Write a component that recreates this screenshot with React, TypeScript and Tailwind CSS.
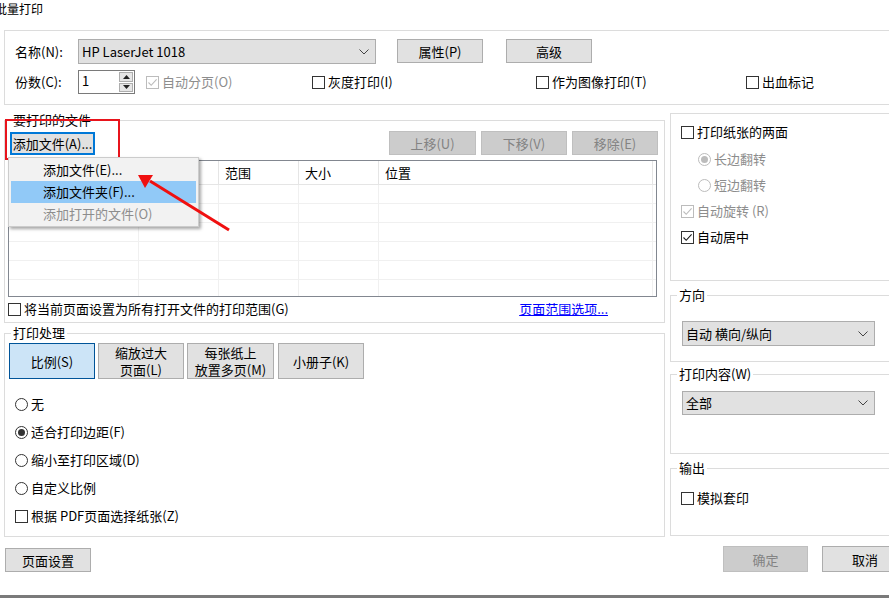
import type { ReactNode } from 'react';

function Chevron() {
  return (
    <svg width="10" height="6" viewBox="0 0 10 6" className="shrink-0">
      <path d="M0.5 0.5 L5 5 L9.5 0.5" fill="none" stroke="#444" strokeWidth="1" />
    </svg>
  );
}

function Btn({
  children,
  className = '',
  disabled,
  selected,
}: {
  children: ReactNode;
  className?: string;
  disabled?: boolean;
  selected?: boolean;
}) {
  let tone = 'bg-[#e1e1e1] border-[#adadad] text-black';
  if (disabled) tone = 'bg-[#cccccc] border-[#bfbfbf] text-[#838383]';
  if (selected) tone = 'bg-[#cce4f7] border-[#005499] text-black';
  return (
    <div className={`flex items-center justify-center border text-center leading-[17px] ${tone} ${className}`}>
      {children}
    </div>
  );
}

function Check({
  label,
  checked,
  disabled,
  className = '',
}: {
  label: string;
  checked?: boolean;
  disabled?: boolean;
  className?: string;
}) {
  const stroke = disabled ? '#bcbcbc' : '#1a1a1a';
  return (
    <div className={`flex items-center gap-[3px] ${className}`}>
      <span
        className={`flex h-[13px] w-[13px] shrink-0 items-center justify-center border bg-white ${
          disabled ? 'border-[#bcbcbc]' : 'border-[#333333]'
        }`}
      >
        {checked && (
          <svg width="11" height="11" viewBox="0 0 11 11">
            <path d="M1.5 5.5 L4.2 8.3 L9.6 2.4" fill="none" stroke={stroke} strokeWidth="1.1" />
          </svg>
        )}
      </span>
      <span className={`whitespace-nowrap ${disabled ? 'text-[#8d8d8d]' : 'text-black'}`}>{label}</span>
    </div>
  );
}

function Radio({ label, checked, disabled }: { label: string; checked?: boolean; disabled?: boolean }) {
  return (
    <div className="flex items-center gap-[3px]">
      <span
        className={`flex h-[13px] w-[13px] shrink-0 items-center justify-center rounded-full border bg-white ${
          disabled ? 'border-[#bcbcbc]' : 'border-[#333333]'
        }`}
      >
        {checked && <span className={`h-[7px] w-[7px] rounded-full ${disabled ? 'bg-[#bcbcbc]' : 'bg-[#333333]'}`} />}
      </span>
      <span className={`whitespace-nowrap ${disabled ? 'text-[#8d8d8d]' : 'text-black'}`}>{label}</span>
    </div>
  );
}

function Combo({ value, className = '' }: { value: string; className?: string }) {
  return (
    <div className={`flex items-center justify-between border border-[#adadad] bg-[#e1e1e1] pl-[3px] pr-[6px] ${className}`}>
      <span className="whitespace-nowrap">{value}</span>
      <Chevron />
    </div>
  );
}

// group box with a caption sitting on the top border
function Group({ label, className = '', children }: { label: string; className?: string; children: ReactNode }) {
  return (
    <fieldset className={`border border-[#dcdcdc] ${className}`}>
      <legend className="ml-[6px] px-[2px] leading-[16px]">{label}</legend>
      {children}
    </fieldset>
  );
}

const columns = [
  { label: '文件名', w: 'w-[130px]' },
  { label: '页数', w: 'w-[80px]' },
  { label: '范围', w: 'w-[80px]' },
  { label: '大小', w: 'w-[80px]' },
  { label: '位置', w: 'w-[274px]' },
];

function FileTable() {
  return (
    <div className="h-[137px] w-[649px] overflow-hidden border border-[#828790] bg-white">
      <div className="flex h-[24px] border-b border-[#e5e5e5]">
        {columns.map((c) => (
          <div key={c.label} className={`${c.w} flex items-center border-r border-[#e5e5e5] pl-[6px] leading-[16px]`}>
            {c.label}
          </div>
        ))}
      </div>
      {[0, 1, 2, 3, 4, 5].map((r) => (
        <div key={r} className="flex h-[19px] border-b border-[#f0f0f0]">
          {columns.map((c) => (
            <div key={c.label} className={`${c.w} border-r border-[#f0f0f0]`} />
          ))}
        </div>
      ))}
    </div>
  );
}

export default function App() {
  return (
    <div className="relative h-[598px] w-[889px] overflow-hidden bg-white font-['Noto_Sans_CJK_SC',sans-serif] text-[13px] text-black">
      <div className="flex h-full w-[915px] flex-col">
        {/* title */}
        <div className="ml-[-5px] h-[30px] text-[12px] leading-[18px]">批量打印</div>

        {/* printer group */}
        <div className="ml-[4px] flex h-[75px] flex-col border-y border-l border-[#dcdcdc] pl-[10px] pt-[8px]">
          <div className="flex items-start">
            <div className="flex h-[25px] w-[63px] items-center">名称(N):</div>
            <Combo value="HP LaserJet 1018" className="h-[25px] w-[298px]" />
            <Btn className="ml-[21px] h-[24px] w-[86px]">属性(P)</Btn>
            <Btn className="ml-[23px] h-[24px] w-[86px]">高级</Btn>
          </div>
          <div className="mt-[6px] flex h-[24px] items-center">
            <div className="w-[63px]">份数(C):</div>
            <div className="flex h-[24px] w-[57px] border border-[#7a7a7a] bg-white">
              <div className="flex-1 pl-[3px] leading-[20px]">1</div>
              <div className="flex w-[16px] flex-col gap-[1px] p-[1px]">
                <div className="flex flex-1 items-center justify-center border border-[#adadad] bg-[#e6e6e6]">
                  <svg width="7" height="4" viewBox="0 0 7 4">
                    <path d="M0 4 L3.5 0 L7 4 Z" fill="#222" />
                  </svg>
                </div>
                <div className="flex flex-1 items-center justify-center border border-[#adadad] bg-[#e6e6e6]">
                  <svg width="7" height="4" viewBox="0 0 7 4">
                    <path d="M0 0 L3.5 4 L7 0 Z" fill="#222" />
                  </svg>
                </div>
              </div>
            </div>
            <Check label="自动分页(O)" checked disabled className="ml-[11px] w-[166px]" />
            <Check label="灰度打印(I)" className="w-[224px]" />
            <Check label="作为图像打印(T)" className="w-[210px]" />
            <Check label="出血标记" />
          </div>
        </div>

        <div className="flex">
          {/* left column */}
          <div className="ml-[4px] flex w-[662px] flex-col">
            <Group label="要打印的文件" className="mt-[7px]">
              <div className="pb-[4px] pl-[3px] pr-[7px]">
                <div className="mt-[3px] flex h-[24px] items-center">
                  <Btn className="ml-[2px] h-[23px] w-[85px] !border-2 !border-[#0078d7]">添加文件(A)...</Btn>
                  <div className="ml-auto mr-[-1px] flex gap-[5px]">
                    <Btn disabled className="h-[24px] w-[87px]">上移(U)</Btn>
                    <Btn disabled className="h-[24px] w-[86px]">下移(V)</Btn>
                    <Btn disabled className="h-[24px] w-[86px]">移除(E)</Btn>
                  </div>
                </div>
                <div className="mt-[5px]">
                  <FileTable />
                </div>
                <div className="mt-[3px] flex h-[18px] items-center">
                  <Check label="将当前页面设置为所有打开文件的打印范围(G)" />
                  <span className="ml-auto mr-[49px] text-[#0000ff] underline">页面范围选项...</span>
                </div>
              </div>
            </Group>

            <Group label="打印处理" className="mt-[2px]">
              <div className="pb-[6px] pl-[4px]">
                <div className="mt-[2px] flex gap-[3px]">
                  <Btn selected className="h-[36px] w-[86px]">比例(S)</Btn>
                  <Btn className="h-[36px] w-[86px] leading-[16px]">
                    缩放过大
                    <br />
                    页面(L)
                  </Btn>
                  <Btn className="h-[36px] w-[87px] leading-[16px]">
                    每张纸上
                    <br />
                    放置多页(M)
                  </Btn>
                  <Btn className="ml-[1px] h-[36px] w-[86px]">小册子(K)</Btn>
                </div>
                <div className="mt-[11px] flex flex-col pl-[6px]">
                  <div className="flex h-[28px] items-center">
                    <Radio label="无" />
                  </div>
                  <div className="flex h-[28px] items-center">
                    <Radio label="适合打印边距(F)" checked />
                  </div>
                  <div className="flex h-[28px] items-center">
                    <Radio label="缩小至打印区域(D)" />
                  </div>
                  <div className="flex h-[28px] items-center">
                    <Radio label="自定义比例" />
                  </div>
                  <div className="flex h-[28px] items-center">
                    <Check label="根据 PDF页面选择纸张(Z)" />
                  </div>
                </div>
              </div>
            </Group>

            <Btn className="ml-[1px] mt-[11px] h-[24px] w-[86px]">页面设置</Btn>
          </div>

          {/* right column */}
          <div className="ml-[5px] flex flex-1 flex-col pr-[12px]">
            <div className="mt-[8px] flex h-[168px] flex-col border border-[#dcdcdc] pl-[10px] pt-[4px]">
              <div className="flex h-[28px] items-center">
                <Check label="打印纸张的两面" />
              </div>
              <div className="flex h-[26px] items-center pl-[17px]">
                <Radio label="长边翻转" checked disabled />
              </div>
              <div className="flex h-[26px] items-center pl-[17px]">
                <Radio label="短边翻转" disabled />
              </div>
              <div className="flex h-[26px] items-center">
                <Check label="自动旋转 (R)" checked disabled />
              </div>
              <div className="flex h-[26px] items-center">
                <Check label="自动居中" checked />
              </div>
            </div>

            <Group label="方向" className="mt-[6px]">
              <div className="pb-[15px] pl-[11px] pt-[18px]">
                <Combo value="自动 横向/纵向" className="h-[25px] w-[193px]" />
              </div>
            </Group>

            <Group label="打印内容(W)" className="mt-[4px]">
              <div className="pb-[38px] pl-[11px] pt-[9px]">
                <Combo value="全部" className="h-[24px] w-[193px]" />
              </div>
            </Group>

            <Group label="输出" className="mt-[6px]">
              <div className="pb-[28px] pl-[10px] pt-[13px]">
                <div className="flex h-[18px] items-center">
                  <Check label="模拟套印" />
                </div>
              </div>
            </Group>

            <div className="mt-[10px] flex gap-[14px] pl-[53px]">
              <Btn disabled className="h-[26px] w-[85px]">确定</Btn>
              <Btn className="h-[26px] w-[86px]">取消</Btn>
            </div>
          </div>
        </div>

        <div className="mt-auto h-[3px] w-full bg-[#7a7a7a]" />
      </div>

      {/* highlight box drawn over the add-file button */}
      <div className="pointer-events-none absolute left-[5px] top-[119px] h-[41px] w-[115px] border-2 border-[#e8141c]" />

      {/* dropdown menu */}
      <div className="absolute left-[8px] top-[157px] w-[191px] border border-[#cccccc] bg-[#f2f2f2] px-[2px] py-[1px] shadow-[2px_2px_3px_rgba(0,0,0,0.35)]">
        <div className="flex h-[22px] items-center pl-[32px]">添加文件(E)...</div>
        <div className="flex h-[22px] items-center bg-[#91c9f7] pl-[32px]">添加文件夹(F)...</div>
        <div className="flex h-[22px] items-center pl-[32px] text-[#8d8d8d]">添加打开的文件(O)</div>
      </div>

      {/* red arrow */}
      <svg className="pointer-events-none absolute left-[130px] top-[165px]" width="110" height="75" viewBox="0 0 110 75">
        <line x1="99" y1="65" x2="20" y2="16" stroke="#f01010" strokeWidth="3" />
        <path d="M8 10 L23 10 L15 23 Z" fill="#f01010" />
      </svg>
    </div>
  );
}
